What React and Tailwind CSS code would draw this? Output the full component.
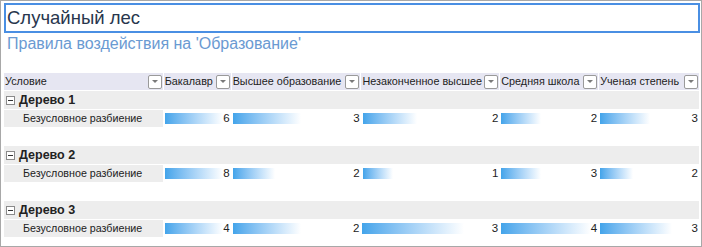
import React from 'react';

const columns = [
  { name: 'Условие', w: 'w-[159px]' },
  { name: 'Бакалавр', w: 'w-[68px]' },
  { name: 'Высшее образование', w: 'w-[130px]' },
  { name: 'Незаконченное высшее', w: 'w-[139px]' },
  { name: 'Средняя школа', w: 'w-[99px]' },
  { name: 'Ученая степень', w: 'w-[101px]' },
];

const trees = [
  { name: 'Дерево 1', values: [6, 3, 2, 2, 3], bars: [60, 68, 54, 40, 50] },
  { name: 'Дерево 2', values: [8, 2, 1, 3, 2], bars: [60, 42, 30, 40, 33] },
  { name: 'Дерево 3', values: [4, 2, 3, 4, 3], bars: [60, 68, 102, 92, 72] },
];

function DropButton() {
  return (
    <div className="w-[14px] h-[14px] shrink-0 rounded-[2px] border border-[#9a9a9a] bg-white flex items-center justify-center">
      <svg width="6" height="4" viewBox="0 0 6 4">
        <path d="M0 0 L6 0 L3 3 Z" fill="#7a7a7a" />
      </svg>
    </div>
  );
}

function MinusBox() {
  return (
    <div className="w-[9px] h-[9px] border border-[#8a8a8a] bg-white flex items-center justify-center">
      <div className="w-[5px] h-px bg-[#333]" />
    </div>
  );
}

export default function App() {
  return (
    <div
      className="w-[702px] h-[247px] border border-[#a8a8a8] bg-white p-[2px] overflow-hidden text-[#222]"
      style={{ fontFamily: '"Liberation Sans", Arial, sans-serif' }}
    >
      {/* Title */}
      <div className="ml-px w-[696px] h-[30px] border-2 border-[#4a8fe3] flex items-center pl-[1px] text-[18.5px] text-[#28364d]">
        Случайный лес
      </div>
      <div className="ml-[4px] mt-[2px] text-[16px] leading-[18px] text-[#6a9ad2]">
        Правила воздействия на 'Образование'
      </div>

      {/* Header */}
      <div className="ml-px mt-[20px] flex h-[17px] bg-[#e6e6f2] text-[10.8px]">
        {columns.map((c, i) => (
          <div
            key={c.name}
            className={`${c.w} flex items-center justify-between pr-px ${i > 0 ? 'border-l border-white pl-[1px]' : 'pl-[1px]'}`}
          >
            <span className="whitespace-nowrap">{c.name}</span>
            <DropButton />
          </div>
        ))}
      </div>

      {/* Trees */}
      <div className="ml-px mt-px">
        {trees.map((t) => (
          <div key={t.name} className="h-[55px]">
            <div className="h-[18px] bg-[#ededed] flex items-center gap-[4px] pl-[2px]">
              <MinusBox />
              <span className="font-bold text-[12.5px]">{t.name}</span>
            </div>
            <div className="mt-px flex h-[17px] text-[10.7px]">
              <div className="w-[159px] bg-[#ededed] flex items-center pl-[19px]">
                Безусловное разбиение
              </div>
              {t.values.map((v, i) => (
                <div
                  key={i}
                  className={`${columns[i + 1].w} flex items-center justify-between pl-[2px] pr-[1px]`}
                >
                  <div
                    className="h-[11px] bg-gradient-to-r from-[#42a4ea] to-white"
                    style={{ width: t.bars[i] }}
                  />
                  <span className="text-[11.5px]">{v}</span>
                </div>
              ))}
            </div>
          </div>
        ))}
      </div>
    </div>
  );
}
